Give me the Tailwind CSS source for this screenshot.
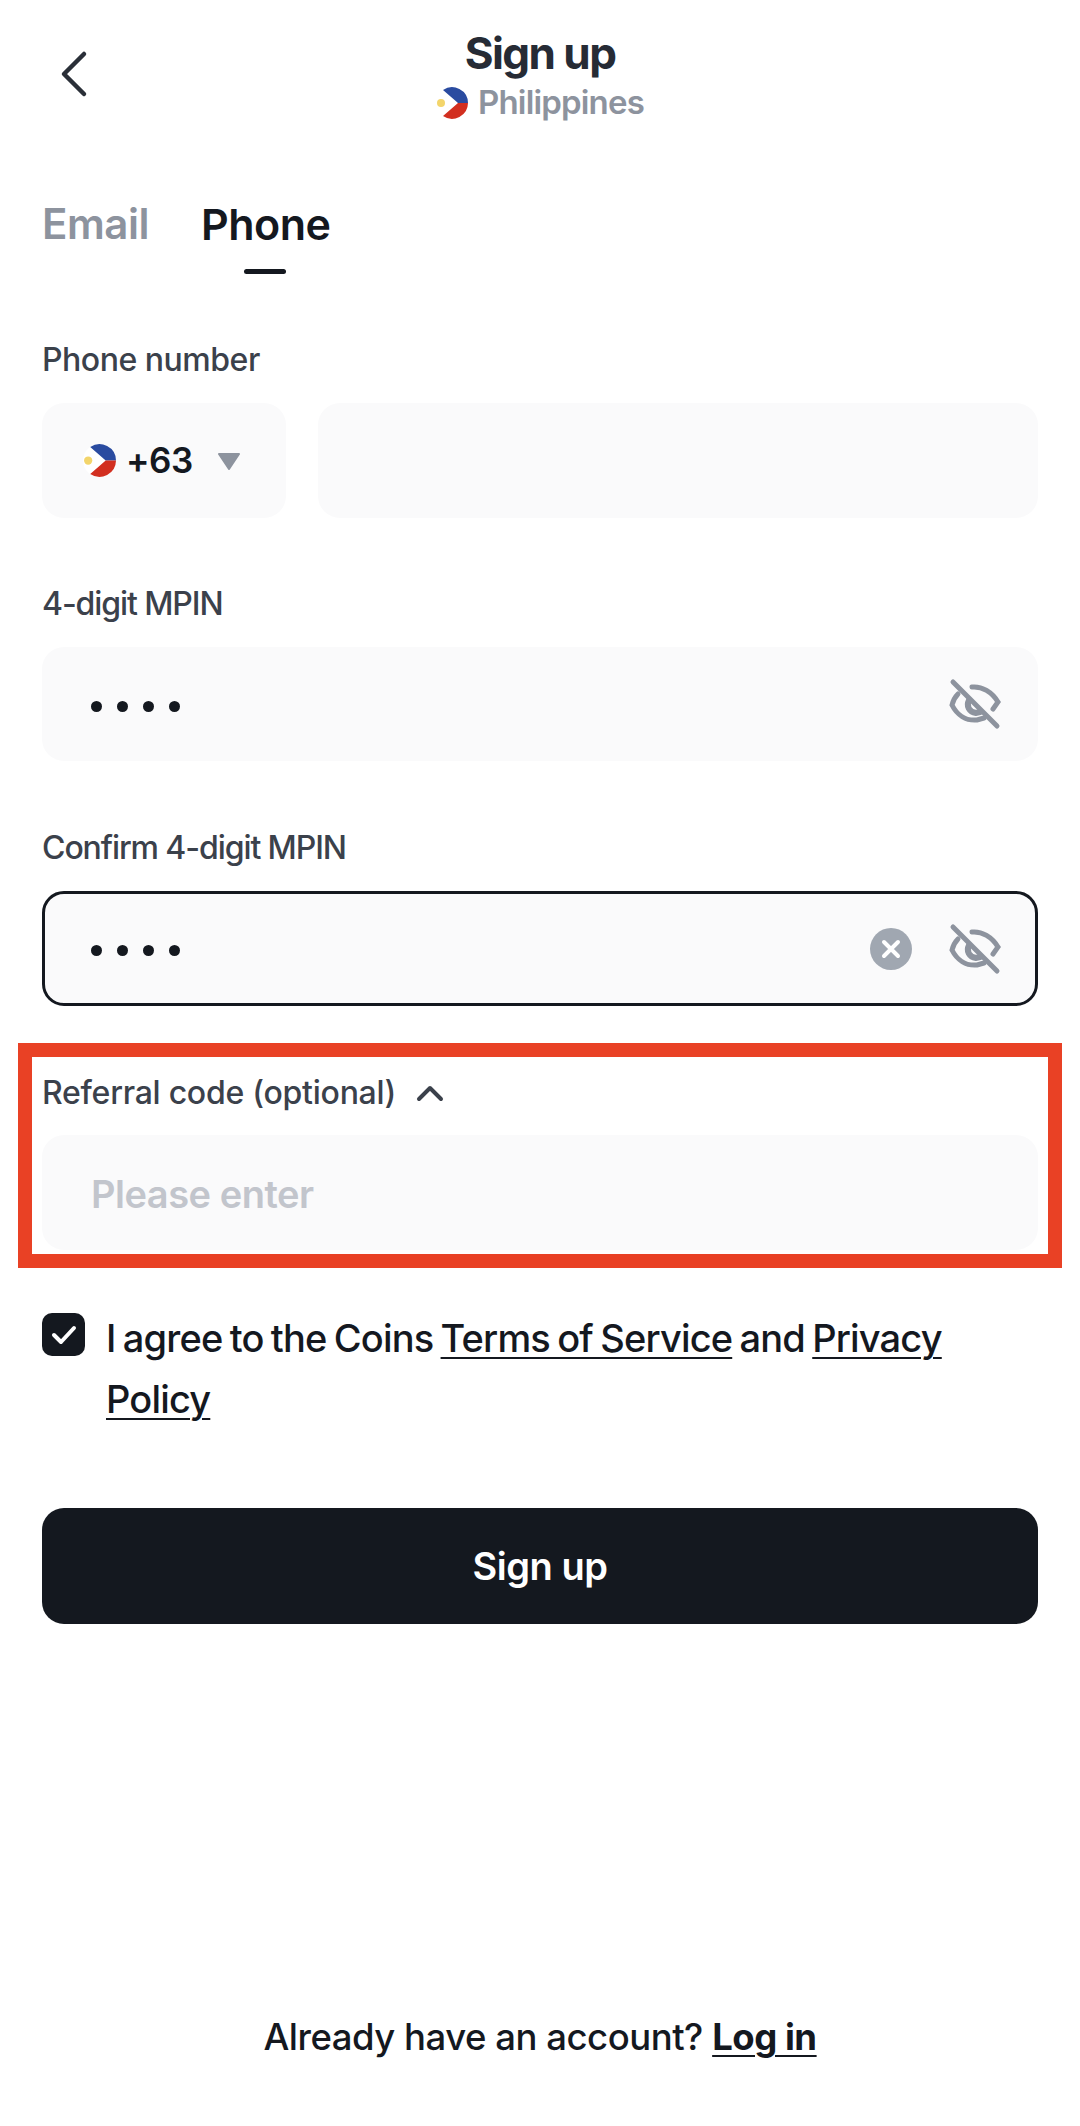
<!DOCTYPE html>
<html lang="en">
<head>
    <meta charset="UTF-8">
    <meta name="viewport" content="width=device-width, initial-scale=1.0">
    <title>Sign up</title>
    <script src="https://cdn.jsdelivr.net/npm/@tailwindcss/browser@4"></script>
</head>
<body class="bg-white font-['Inter',sans-serif] tracking-[-0.03em]">
    <div class="w-[1080px] h-[2126px] relative flex flex-col overflow-hidden">
        <!-- Header -->
        <header class="h-[136px] relative flex flex-col items-center pt-[27px]">
            <svg class="absolute left-[58px] top-[50px]" width="30" height="48" viewBox="0 0 30 48" fill="none" stroke="#2a2f38" stroke-width="4.5" stroke-linecap="round" stroke-linejoin="round"><path d="M26 4 L6 24 L26 44"/></svg>
            <h1 class="text-[44px] leading-[52px] font-bold tracking-[-0.035em] text-[#262b35]">Sign up</h1>
            <div class="flex items-center gap-[10px] h-[48px]">
                <svg width="32" height="34" viewBox="0 0 32 32"><circle cx="16" cy="16" r="16" fill="#fff"/><path d="M7 3 A16 16 0 0 1 32 16 L22 16 Z" fill="#2a4ba0"/><path d="M7 29 A16 16 0 0 0 32 16 L22 16 Z" fill="#d22f20"/><circle cx="5" cy="16" r="4" fill="#f3d56b"/></svg>
                <span class="text-[33px] font-semibold tracking-[-0.025em] text-[#8d939e]">Philippines</span>
            </div>
        </header>

        <!-- Tabs -->
        <div class="flex gap-[52px] pl-[42px] mt-[57px] h-[62px]">
            <span class="text-[42px] leading-[62px] font-semibold text-[#8d939e]">Email</span>
            <div class="relative">
                <span class="text-[43px] leading-[62px] font-semibold text-[#14181f]">Phone</span>
                <span class="absolute left-[43px] top-[76px] w-[42px] h-[5px] rounded-full bg-[#14181f]"></span>
            </div>
        </div>

        <!-- Form -->
        <main class="px-[42px] mt-[35px] flex flex-col">
            <label class="text-[32px] leading-[64px] font-medium text-[#3b414b] h-[64px] mt-[38px] mb-[11px]">Phone number</label>
            <div class="flex gap-[32px]">
                <div class="w-[244px] h-[115px] rounded-[22px] bg-[#fafafb] flex items-center pl-[41px]">
                    <svg width="33" height="35" viewBox="0 0 32 32"><circle cx="16" cy="16" r="16" fill="#fff"/><path d="M7 3 A16 16 0 0 1 32 16 L22 16 Z" fill="#2a4ba0"/><path d="M7 29 A16 16 0 0 0 32 16 L22 16 Z" fill="#d22f20"/><circle cx="5" cy="16" r="4" fill="#f3d56b"/></svg>
                    <span class="ml-[10px] text-[35px] font-semibold text-[#14181f]">+63</span>
                    <svg class="ml-[24px]" width="24" height="18" viewBox="0 0 24 18"><path d="M2 2 H22 L12 17 Z" fill="#8d939e" stroke="#8d939e" stroke-width="2" stroke-linejoin="round"/></svg>
                </div>
                <div class="flex-1 h-[115px] rounded-[22px] bg-[#fafafb]"></div>
            </div>

            <label class="text-[32px] leading-[64px] font-medium tracking-[-0.034em] text-[#3b414b] h-[64px] mt-[54px] mb-[11px]">4-digit MPIN</label>
            <div class="h-[114px] rounded-[22px] bg-[#fafafb] flex items-center pl-[49px] pr-[36px]">
                <div class="flex gap-[15px] mt-[4px]"><i class="w-[11px] h-[11px] rounded-full bg-[#14181f]"></i><i class="w-[11px] h-[11px] rounded-full bg-[#14181f]"></i><i class="w-[11px] h-[11px] rounded-full bg-[#14181f]"></i><i class="w-[11px] h-[11px] rounded-full bg-[#14181f]"></i></div>
                <svg class="ml-auto" width="54" height="54" viewBox="0 0 54 54" fill="none" stroke="#8d939e" stroke-width="5" stroke-linecap="round"><path d="M5 5 L49 49"/><path d="M24 10 C34 9 44 15 50 25 L45 32"/><path d="M10 17 C7 20 5 24 4 28 C9 38 18 44 29 43 L36 41"/><path d="M21 23 C18 29 21 35 28 36 L32 35" stroke-width="6"/></svg>
            </div>

            <label class="text-[32px] leading-[64px] font-medium tracking-[-0.034em] text-[#3b414b] h-[64px] mt-[55px] mb-[11px]">Confirm 4-digit MPIN</label>
            <div class="h-[115px] rounded-[22px] bg-[#fafafb] border-[3px] border-[#14181f] flex items-center pl-[46px] pr-[33px]">
                <div class="flex gap-[15px] mt-[4px]"><i class="w-[11px] h-[11px] rounded-full bg-[#14181f]"></i><i class="w-[11px] h-[11px] rounded-full bg-[#14181f]"></i><i class="w-[11px] h-[11px] rounded-full bg-[#14181f]"></i><i class="w-[11px] h-[11px] rounded-full bg-[#14181f]"></i></div>
                <svg class="ml-auto" width="42" height="42" viewBox="0 0 42 42"><circle cx="21" cy="21" r="21" fill="#a0a7b1"/><path d="M14 14 L28 28 M28 14 L14 28" stroke="#fff" stroke-width="4" stroke-linecap="round"/></svg>
                <svg class="ml-[36px]" width="54" height="54" viewBox="0 0 54 54" fill="none" stroke="#8d939e" stroke-width="5" stroke-linecap="round"><path d="M5 5 L49 49"/><path d="M24 10 C34 9 44 15 50 25 L45 32"/><path d="M10 17 C7 20 5 24 4 28 C9 38 18 44 29 43 L36 41"/><path d="M21 23 C18 29 21 35 28 36 L32 35" stroke-width="6"/></svg>
            </div>

            <div class="flex items-center h-[64px] mt-[55px]">
                <span class="text-[32px] font-medium tracking-[-0.008em] text-[#3b414b]">Referral code (optional)</span>
                <svg class="ml-[20px]" width="28" height="18" viewBox="0 0 28 18" fill="none" stroke="#3b414b" stroke-width="4" stroke-linecap="round" stroke-linejoin="round"><path d="M3 15 L14 4 L25 15"/></svg>
            </div>
            <div class="h-[115px] mt-[10px] rounded-[22px] bg-[#fafafb] flex items-center pl-[49px] pt-[3px]">
                <span class="text-[38px] font-semibold text-[#c2c5cc]">Please enter</span>
            </div>

            <div class="flex gap-[21px] mt-[63px]">
                <div class="w-[43px] h-[43px] shrink-0 rounded-[10px] bg-[#14181f] flex items-center justify-center">
                    <svg width="26" height="20" viewBox="0 0 26 20" fill="none" stroke="#fff" stroke-width="4" stroke-linecap="round" stroke-linejoin="round"><path d="M3 10 L10 17 L23 3"/></svg>
                </div>
                <p class="max-w-[900px] text-[38px] leading-[61px] font-medium tracking-[-0.022em] [word-spacing:-2px] text-[#14181f] -mt-[5px]">I agree to the Coins <span class="underline underline-offset-[5px] decoration-[2px]">Terms of Service</span> and <span class="underline underline-offset-[5px] decoration-[2px]">Privacy Policy</span></p>
            </div>

            <button class="h-[116px] mt-[78px] pt-[1px] rounded-[22px] bg-[#14181f] text-white text-[38px] font-semibold">Sign up</button>
        </main>

        <footer class="absolute left-0 right-0 top-[2010px] text-center text-[36.5px] leading-[54px] font-medium text-[#14181f]">Already have an account? <span class="font-bold underline underline-offset-[5px] decoration-[2px]">Log in</span></footer>

        <!-- Annotation -->
        <div class="absolute left-[18px] top-[1043px] w-[1044px] h-[225px] border-[14px] border-[#e94125]"></div>
    </div>
</body>
</html>
